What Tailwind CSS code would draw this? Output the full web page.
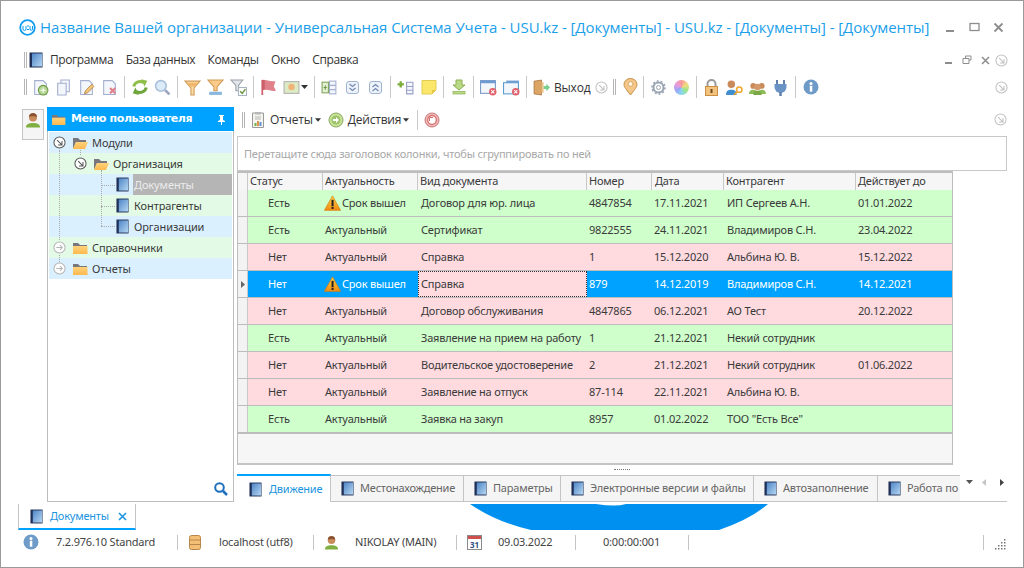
<!DOCTYPE html>
<html lang="ru">
<head>
  <meta charset="UTF-8" />
  <title>USU - Документы</title>
  <script src="https://cdn.jsdelivr.net/npm/@tailwindcss/browser@4"></script>
</head>
<body class="bg-white">
  <svg class="absolute w-0 h-0">
    <defs>
      <linearGradient id="bookG" x1="0" y1="0" x2="1" y2="1"><stop offset="0" stop-color="#4f86c6"/><stop offset="1" stop-color="#b5d6f2"/></linearGradient>
      <linearGradient id="folderG" x1="0" y1="0" x2="0" y2="1"><stop offset="0" stop-color="#ffd27a"/><stop offset="1" stop-color="#fdb94f"/></linearGradient>
      <linearGradient id="warnG" x1="0" y1="0" x2="0" y2="1"><stop offset="0" stop-color="#ffd54a"/><stop offset="1" stop-color="#f08a12"/></linearGradient>
      <symbol id="book" viewBox="0 0 14 16"><rect x="0.5" y="0.5" width="13" height="15" fill="#1f2f57"/><rect x="3" y="1.5" width="10" height="13" fill="url(#bookG)"/></symbol>
      <symbol id="folder" viewBox="0 0 16 12"><path d="M1 1h5l2 2h7v2H1z" fill="#77777d"/><rect x="1" y="4" width="14.5" height="8" fill="url(#folderG)"/></symbol>
      <symbol id="folderOpen" viewBox="0 0 16 12"><path d="M1 12V1h5l2 2h6v2H4z" fill="#77777d"/><path d="M1 12l3-7h12l-3 7z" fill="url(#folderG)"/></symbol>
      <symbol id="goDown" viewBox="0 0 14 14"><circle cx="7" cy="7" r="6" fill="#fff" stroke="currentColor" stroke-width="1.1"/><path d="M4.5 4.5l5 5M9.7 5.5v4.2H5.5" fill="none" stroke="currentColor" stroke-width="1.1"/></symbol>
      <symbol id="goRight" viewBox="0 0 14 14"><circle cx="7" cy="7" r="6" fill="#fff" stroke="currentColor" stroke-width="1.1"/><path d="M3.5 7h6.5M7.5 4.5L10 7l-2.5 2.5" fill="none" stroke="currentColor" stroke-width="1.1"/></symbol>
      <symbol id="warn" viewBox="0 0 16 15"><path d="M8 .8L15.6 14.4H.4z" fill="url(#warnG)" stroke="#d9800f" stroke-width=".7"/><rect x="7.1" y="4.5" width="1.9" height="6" fill="#222"/><rect x="7.1" y="11.2" width="1.9" height="1.9" fill="#222"/></symbol>
      <symbol id="user" viewBox="0 0 16 16"><path d="M1 15.500c0-3.500 3-4.500 7-4.500s7 1 7 4.500z" fill="#7fb041"/><circle cx="8" cy="5.500" r="4" fill="#c98b5c"/><path d="M4 5c0-3 2-4 4-4s4 1 4 4c-2-1-6-1-8 0z" fill="#8a5230"/></symbol>
      <symbol id="info" viewBox="0 0 16 16"><circle cx="8" cy="8" r="7.500" fill="#6f9bc8"/><rect x="6.800" y="6.700" width="2.500" height="6" fill="#fff"/><circle cx="8" cy="4.400" r="1.500" fill="#fff"/></symbol>
      <symbol id="page" viewBox="0 0 16 16"><path d="M2.500 1.500h8l3 3v10h-11z" fill="#f3f6fb" stroke="#a4afd0"/></symbol>
    </defs>
  </svg>

  <div class="relative w-[1024px] h-[568px] overflow-hidden border border-[#9a9a9a] flex flex-col text-[#3a3a3a] text-[11px] tracking-[-0.2px] font-['Noto_Sans','DejaVu_Sans',sans-serif]">

    <!-- заголовок окна -->
    <div class="h-[47px] shrink-0 flex items-center pl-[18px] pr-[19px] pt-[5px]">
      <svg class="w-[17px] h-[17px] mr-[4px] shrink-0" viewBox="0 0 17 17"><circle cx="8.500" cy="8.500" r="7.300" fill="none" stroke="#0e9cf2" stroke-width="1.800"/><path d="M4 7v3a1 1 0 0 0 3 0V7M8 7h2M8 10.500h2M11 7v3a1 1 0 0 0 2.500 0V7" fill="none" stroke="#0e9cf2" stroke-width="1"/></svg>
      <div class="text-[15px] tracking-[-0.075px] text-[#1ba0ea] whitespace-nowrap font-['Open_Sans',sans-serif]">Название Вашей организации - Универсальная Система Учета - USU.kz - [Документы] - USU.kz - [Документы] - [Документы]</div>
      <div class="ml-auto flex items-center gap-[13px] shrink-0">
        <svg class="w-[11px] h-[11px]" viewBox="0 0 11 11"><rect x="1" y="8" width="8" height="2" fill="#8d8d8d"/></svg>
        <svg class="w-[11px] h-[11px]" viewBox="0 0 11 11"><rect x="1" y="1.500" width="9" height="7" fill="none" stroke="#8d8d8d" stroke-width="1.300"/></svg>
        <svg class="w-[11px] h-[11px]" viewBox="0 0 11 11"><path d="M1.500 1.500l8 8M9.500 1.500l-8 8" stroke="#8d8d8d" stroke-width="1.800"/></svg>
      </div>
    </div>

    <!-- меню -->
    <div class="h-[24px] shrink-0 flex items-center pl-[23px] pr-[15px] text-[12px]">
      <div class="w-[3px] h-[16px] border-x border-[#b5b5b5] mr-[2px]"></div>
      <svg class="w-[14px] h-[16px] mr-[7px]"><use href="#book"/></svg>
      <div class="flex gap-[12.5px] text-[#333] font-['Open_Sans',sans-serif] tracking-[-0.4px]"><span>Программа</span><span>База данных</span><span>Команды</span><span>Окно</span><span>Справка</span></div>
      <div class="ml-auto flex items-center gap-[9px] text-[#8d8d8d]">
        <svg class="w-[9px] h-[9px]" viewBox="0 0 9 9"><rect x="1" y="6" width="7" height="2" fill="#8d8d8d"/></svg>
        <svg class="w-[10px] h-[10px]" viewBox="0 0 10 10"><path d="M3.500 3V1h5.500v4H7M1 3.500h6v5H1z" fill="none" stroke="#8d8d8d"/></svg>
        <svg class="w-[9px] h-[9px]" viewBox="0 0 9 9"><path d="M1 1l7 7M8 1l-7 7" stroke="#8d8d8d" stroke-width="1.500"/></svg>
        <svg class="w-[13px] h-[13px] -ml-[4px] text-[#c0c0c0]"><use href="#goDown"/></svg>
      </div>
    </div>

    <!-- панель инструментов -->
    <div class="h-[30px] shrink-0 flex items-center pl-[23px] pr-[15px]">
      <div class="w-[3px] h-[16px] border-x border-[#b5b5b5] mr-[2px]"></div>
      <div class="w-[23px] flex justify-center"><svg class="w-[17px] h-[17px]" viewBox="0 0 16 16"><use href="#page"/><circle cx="10.500" cy="10.500" r="4.500" fill="#b5d592" stroke="#6d9a45"/><path d="M10.500 8v5M8 10.500h5" stroke="#fff"/></svg></div>
      <div class="w-[23px] flex justify-center"><svg class="w-[17px] h-[17px]" viewBox="0 0 16 16"><path d="M5.500 1h8v11h-8z" fill="#f3f6fb" stroke="#a4afd0"/><path d="M2.500 4h8v11h-8z" fill="#f3f6fb" stroke="#a4afd0"/></svg></div>
      <div class="w-[23px] flex justify-center"><svg class="w-[17px] h-[17px]" viewBox="0 0 16 16"><use href="#page"/><path d="M6 14l1-3 6-6 2 2-6 6z" fill="#f3c777" stroke="#a8763a" stroke-width=".7"/></svg></div>
      <div class="w-[23px] flex justify-center"><svg class="w-[17px] h-[17px]" viewBox="0 0 16 16"><use href="#page"/><path d="M8.500 8.500l5 5M13.500 8.500l-5 5" stroke="#e0808a" stroke-width="2"/></svg></div>
      <div class="w-px h-[22px] bg-[#c8c8c8] mx-[3px]"></div>
      <div class="w-[23px] flex justify-center"><svg class="w-[18px] h-[18px]" viewBox="0 0 16 16"><path d="M2.500 7.500A5.500 5 0 0 1 11 4" fill="none" stroke="#8fbf48" stroke-width="2.600"/><path d="M9 1l5.500 1.500L12 7.500z" fill="#8fbf48"/><path d="M13.500 8.500A5.500 5 0 0 1 5 12" fill="none" stroke="#6ea53a" stroke-width="2.600"/><path d="M7 15L1.500 13.500 4 8.500z" fill="#6ea53a"/></svg></div>
      <div class="w-[23px] flex justify-center"><svg class="w-[17px] h-[17px]" viewBox="0 0 16 16"><circle cx="6.500" cy="6.500" r="5" fill="#dcebf8" stroke="#a9c0db" stroke-width="1.500"/><path d="M10.500 10.500l4 4" stroke="#99a5bf" stroke-width="2.500"/></svg></div>
      <div class="w-px h-[22px] bg-[#c8c8c8] mx-[3px]"></div>
      <div class="w-[23px] flex justify-center"><svg class="w-[17px] h-[17px]" viewBox="0 0 16 16"><path d="M1 2h14L9.500 8.500V15h-3V8.500z" fill="#fbdca8" stroke="#d09a55"/><path d="M3 3.500h10l-3 3.500H6z" fill="#f4b66a"/></svg></div>
      <div class="w-[23px] flex justify-center"><svg class="w-[17px] h-[17px]" viewBox="0 0 16 16"><path d="M1 1h14L9.500 7.500V11h-3V7.500z" fill="#fbcb8c" stroke="#d09a55"/><rect x="2" y="12" width="12" height="3" fill="#8ab8e0"/></svg></div>
      <div class="w-[23px] flex justify-center"><svg class="w-[17px] h-[17px]" viewBox="0 0 16 16"><path d="M1 1h11L8 6v5H5.500V6z" fill="#e2e5e9" stroke="#9aa1a9"/><rect x="8" y="8" width="7.500" height="7.500" fill="#fff" stroke="#a8b4c3"/><path d="M9.500 11.500l2 2 3-4" fill="none" stroke="#6d9a45" stroke-width="1.400"/></svg></div>
      <div class="w-px h-[22px] bg-[#c8c8c8] mx-[3px]"></div>
      <div class="w-[23px] flex justify-center"><svg class="w-[17px] h-[17px]" viewBox="0 0 16 16"><path d="M1.500 1c4-1 7 2 13 1l-1.500 5 2 4c-5 1-8-2-12-.500L3 15H1.500z" fill="#e0808a"/><path d="M1.500 1c1 0 2 0 3 .5V10c-1 0-2 .1-2 .5L3 15H1.500z" fill="#c9606a"/></svg></div>
      <div class="w-[23px] flex justify-center"><svg class="w-[17px] h-[17px]" viewBox="0 0 16 16"><rect x="1" y="2.500" width="14" height="11" fill="#dcebc4" stroke="#b0b0b0"/><circle cx="8" cy="7.500" r="3" fill="#f0b478"/></svg></div>
      <svg class="w-[7px] h-[4px] -ml-[2px] mr-[3px]" viewBox="0 0 7 4"><path d="M0 0h7L3.500 4z" fill="#333"/></svg>
      <div class="w-px h-[22px] bg-[#c8c8c8] mx-[3px]"></div>
      <div class="w-[23px] flex justify-center"><svg class="w-[17px] h-[17px]" viewBox="0 0 16 16"><rect x="8" y="2" width="6" height="12" fill="#f3f6fb" stroke="#a4afd0"/><path d="M8 6h6M8 10h6" stroke="#a4afd0"/><rect x="1" y="3" width="6" height="10" fill="#e3f0d4" stroke="#7fa55a"/><path d="M4 6v4M2.500 8h3" stroke="#6d9a45"/></svg></div>
      <div class="w-[23px] flex justify-center"><svg class="w-[15px] h-[15px]" viewBox="0 0 15 15"><rect x="1.500" y="1.500" width="12" height="12" rx="2.500" fill="#eef3fa" stroke="#9fb3d2"/><path d="M4.500 4l3 2.500 3-2.500M4.500 8l3 2.500 3-2.500" fill="none" stroke="#7089b5" stroke-width="1.200"/></svg></div>
      <div class="w-[23px] flex justify-center"><svg class="w-[15px] h-[15px]" viewBox="0 0 15 15"><rect x="1.500" y="1.500" width="12" height="12" rx="2.500" fill="#eef3fa" stroke="#9fb3d2"/><path d="M4.500 7l3-2.500 3 2.500M4.500 11l3-2.500 3 2.500" fill="none" stroke="#7089b5" stroke-width="1.200"/></svg></div>
      <div class="w-px h-[22px] bg-[#c8c8c8] mx-[3px]"></div>
      <div class="w-[23px] flex justify-center"><svg class="w-[17px] h-[17px]" viewBox="0 0 16 16"><path d="M3.500 2v6M.5 5h6" stroke="#7cae3c" stroke-width="2.200"/><path d="M9 3h6v11H9zM9 7h6M9 10.500h6" fill="#f3f6fb" stroke="#98a0c8"/></svg></div>
      <div class="w-[23px] flex justify-center"><svg class="w-[16px] h-[16px]" viewBox="0 0 16 16"><path d="M1 1.500h14V11l-4 4H1z" fill="#fbe76a" stroke="#e2cb55"/><path d="M15 11h-4v4z" fill="#e5c84a"/></svg></div>
      <div class="w-px h-[22px] bg-[#c8c8c8] mx-[3px]"></div>
      <div class="w-[23px] flex justify-center"><svg class="w-[16px] h-[16px]" viewBox="0 0 16 16"><path d="M5 1h6v5h3l-6 5-6-5h3z" fill="#b9da85" stroke="#8cae55"/><rect x="2" y="12.500" width="12" height="2.500" fill="#b9da85" stroke="#8cae55" stroke-width=".7"/></svg></div>
      <div class="w-px h-[22px] bg-[#c8c8c8] mx-[3px]"></div>
      <div class="w-[23px] flex justify-center"><svg class="w-[17px] h-[17px]" viewBox="0 0 16 16"><rect x=".5" y="1.500" width="14" height="12" fill="#f3f6fb" stroke="#7a9cc8"/><rect x=".5" y="1.500" width="14" height="2.500" fill="#6f9bd0"/><circle cx="12" cy="12" r="3.500" fill="#e0606a"/><path d="M10.500 10.500l3 3M13.500 10.500l-3 3" stroke="#fff"/></svg></div>
      <div class="w-[23px] flex justify-center"><svg class="w-[17px] h-[17px]" viewBox="0 0 16 16"><path d="M3 1.500h12v2H3z" fill="#6f9bd0"/><rect x=".5" y="3.500" width="14" height="10.500" fill="#f3f6fb" stroke="#5b9bd0"/><circle cx="12" cy="12" r="3.500" fill="#e0606a"/><path d="M10.500 10.500l3 3M13.500 10.500l-3 3" stroke="#fff"/></svg></div>
      <div class="w-px h-[22px] bg-[#c8c8c8] mx-[3px]"></div>
      <div class="w-[23px] flex justify-center"><svg class="w-[17px] h-[17px]" viewBox="0 0 16 16"><path d="M1 2l7-1v14l-7-1z" fill="#dba566" stroke="#a8703a" stroke-width=".7"/><path d="M8 3h2v10H8z" fill="#eec68c"/><path d="M10 6.500h2.500V4.500L16 8l-3.500 3.500v-2H10z" fill="#7ccf8c"/></svg></div>
      <span class="ml-[1px] mt-[1px] w-[40px] whitespace-nowrap text-[#333] text-[12px] font-['Open_Sans',sans-serif] tracking-[-0.2px]">Выход</span>
      <svg class="w-[13px] h-[13px] ml-[1px] text-[#c0c0c0]"><use href="#goDown"/></svg>
      <div class="w-[3px] h-[16px] border-x border-[#b5b5b5] mx-[5px]"></div>
      <div class="w-[19px] flex justify-center"><svg class="w-[15px] h-[18px]" viewBox="0 0 15 18"><path d="M7.500 17C3 11 1 9 1 6.500a6.500 6 0 0 1 13 0C14 9 12 11 7.500 17z" fill="#f3c68a" stroke="#c98f45"/><circle cx="7.500" cy="6" r="2.300" fill="#fff6e5" stroke="#c98f45" stroke-width=".6"/></svg></div>
      <div class="w-px h-[22px] bg-[#c8c8c8] mx-[3px]"></div>
      <div class="w-[23px] flex justify-center"><svg class="w-[15px] h-[15px]" viewBox="0 0 15 15"><circle cx="7.500" cy="7.500" r="5" fill="none" stroke="#9aa5b3" stroke-width="2"/><circle cx="7.500" cy="7.500" r="6.500" fill="none" stroke="#9aa5b3" stroke-width="1.500" stroke-dasharray="2 2"/><circle cx="7.500" cy="7.500" r="2" fill="#fff" stroke="#9aa5b3"/></svg></div>
      <div class="w-[23px] flex justify-center"><div class="w-[15px] h-[15px] rounded-full bg-[conic-gradient(#f79a9a,#f4dc7f,#9fe38a,#88d8ee,#9aa6f4,#eb9ae0,#f79a9a)]"></div></div>
      <div class="w-px h-[22px] bg-[#c8c8c8] mx-[3px]"></div>
      <div class="w-[23px] flex justify-center"><svg class="w-[15px] h-[17px]" viewBox="0 0 15 17"><path d="M3.500 8V5a4 4 0 0 1 8 0v3" fill="none" stroke="#9a9a9a" stroke-width="2"/><rect x="1.500" y="7.500" width="12" height="9" fill="#f3c27c" stroke="#c98f45"/><rect x="6.500" y="10" width="2" height="4" fill="#6b4a20"/></svg></div>
      <div class="w-[23px] flex justify-center"><svg class="w-[17px] h-[17px]" viewBox="0 0 16 16"><path d="M0 15c0-4 2-5 5-5s5 1 5 5z" fill="#3f8fd0"/><circle cx="5" cy="5" r="3.500" fill="#c98b5c"/><circle cx="12.500" cy="10" r="2.500" fill="none" stroke="#f0a830" stroke-width="1.500"/><path d="M10.500 12l-3 3" stroke="#f0a830" stroke-width="1.500"/></svg></div>
      <div class="w-[23px] flex justify-center"><svg class="w-[17px] h-[17px]" viewBox="0 0 16 16"><path d="M0 14c0-3 2-4 4-4s4 1 4 4zM8 14c0-3 2-4 4-4s4 1 4 4z" fill="#8dbb55"/><circle cx="4" cy="6.500" r="2.700" fill="#c98b5c"/><circle cx="12" cy="6.500" r="2.700" fill="#c98b5c"/><path d="M4 15c0-3 2-4 4-4s4 1 4 4z" fill="#7aa845"/><circle cx="8" cy="7.500" r="3" fill="#d49a6c"/></svg></div>
      <div class="w-[23px] flex justify-center"><svg class="w-[15px] h-[17px]" viewBox="0 0 15 17"><path d="M4 1v4M11 1v4" stroke="#5f7fa8" stroke-width="2"/><path d="M1.500 5h12v3a6 6 0 0 1-12 0z" fill="#6a93c5"/><path d="M7.500 13v4" stroke="#5f7fa8" stroke-width="2.500"/></svg></div>
      <div class="w-px h-[22px] bg-[#c8c8c8] mx-[3px]"></div>
      <div class="w-[23px] flex justify-center"><svg class="w-[16px] h-[16px]"><use href="#info"/></svg></div>
      <svg class="w-[13px] h-[13px] ml-auto text-[#c0c0c0]"><use href="#goDown"/></svg>
    </div>

    <!-- основная часть -->
    <div class="h-[396px] shrink-0 flex mt-[4px] pl-[21px]">
      <div class="w-[22px] h-[31px] mt-[3px] shrink-0 border border-[#c4c4c4] bg-[#f5f5f5] flex justify-center pt-[2px]">
        <svg class="w-[16px] h-[16px]"><use href="#user"/></svg>
      </div>

      <!-- меню пользователя -->
      <div class="w-[187px] h-[395px] mt-[1px] ml-[3px] shrink-0 flex flex-col border border-t-0 border-[#bdbdbd] relative">
        <div class="h-[24px] shrink-0 bg-[#00a2ff] -mx-px flex items-center pt-[1px] pl-[4px] pr-[8px] text-white font-bold text-[11px] font-['DejaVu_Sans',sans-serif] tracking-[-0.4px]">
          <svg class="w-[15px] h-[11px] mr-[5px]"><use href="#folder"/></svg>Меню пользователя
          <svg class="w-[9px] h-[10px] ml-auto" viewBox="0 0 9 10"><path d="M2 0h5v1H6v4l2 1v1H5v3H4V7H1V6l2-1V1H2z" fill="#fff"/></svg>
        </div>
        <div class="mt-[1px] mx-px tracking-[-0.1px] relative">
          <div class="h-[21px] bg-[#daf0ff] flex items-center pl-[4px]"><svg class="w-[13px] h-[13px] text-[#555]"><use href="#goDown"/></svg><svg class="w-[16px] h-[12px] ml-[6px] mr-[4px]"><use href="#folderOpen"/></svg><span class="mt-[2px]">Модули</span></div>
          <div class="h-[21px] bg-[#e3fbe6] flex items-center pl-[25px]"><svg class="w-[13px] h-[13px] text-[#555]"><use href="#goDown"/></svg><svg class="w-[16px] h-[12px] ml-[6px] mr-[4px]"><use href="#folderOpen"/></svg><span class="mt-[2px]">Организация</span></div>
          <div class="h-[21px] bg-[#daf0ff] flex items-center pl-[67px]"><svg class="w-[13px] h-[15px] mr-[4px]"><use href="#book"/></svg><span class="self-stretch flex-1 bg-[#b5b5b5] text-[#ececec] flex items-center pl-[1px] pt-[2px]">Документы</span></div>
          <div class="h-[21px] bg-[#e3fbe6] flex items-center pl-[67px]"><svg class="w-[13px] h-[15px] mr-[5px]"><use href="#book"/></svg><span class="mt-[2px]">Контрагенты</span></div>
          <div class="h-[21px] bg-[#daf0ff] flex items-center pl-[67px]"><svg class="w-[13px] h-[15px] mr-[5px]"><use href="#book"/></svg><span class="mt-[2px]">Организации</span></div>
          <div class="h-[21px] bg-[#e3fbe6] flex items-center pl-[4px]"><svg class="w-[13px] h-[13px] text-[#b5b5b5]"><use href="#goRight"/></svg><svg class="w-[16px] h-[12px] ml-[6px] mr-[4px]"><use href="#folder"/></svg><span class="mt-[2px]">Справочники</span></div>
          <div class="h-[21px] bg-[#daf0ff] flex items-center pl-[4px]"><svg class="w-[13px] h-[13px] text-[#b5b5b5]"><use href="#goRight"/></svg><svg class="w-[16px] h-[12px] ml-[6px] mr-[4px]"><use href="#folder"/></svg><span class="mt-[2px]">Отчеты</span></div>
          <!-- линии дерева -->
          <div class="absolute left-[10px] top-[18px] h-[90px] border-l border-dotted border-[#aaa]"></div>
          <div class="absolute left-[10px] top-[123px] h-[7px] border-l border-dotted border-[#aaa]"></div>
          <div class="absolute left-[31px] top-[18px] h-[5px] border-l border-dotted border-[#aaa]"></div>
          <div class="absolute left-[52px] top-[38px] h-[56px] border-l border-dotted border-[#aaa]"></div>
          <div class="absolute left-[52px] top-[53px] w-[14px] border-t border-dotted border-[#aaa]"></div>
          <div class="absolute left-[52px] top-[74px] w-[14px] border-t border-dotted border-[#aaa]"></div>
          <div class="absolute left-[52px] top-[94px] w-[14px] border-t border-dotted border-[#aaa]"></div>
        </div>
        <svg class="absolute right-[5px] bottom-[5px] w-[14px] h-[14px]" viewBox="0 0 14 14"><circle cx="5.500" cy="5.500" r="4.300" fill="none" stroke="#1f6fc0" stroke-width="2"/><path d="M9 9l4 4" stroke="#1f6fc0" stroke-width="2.500"/></svg>
      </div>

      <!-- правая часть -->
      <div class="w-[770px] ml-[3px] shrink-0 flex flex-col">
        <div class="h-[30px] shrink-0 flex items-center pb-[3px] text-[12px] text-[#333] pl-[5px] font-['Open_Sans',sans-serif] tracking-[-0.2px]">
          <div class="w-[3px] h-[16px] border-x border-[#b5b5b5] mr-[5px]"></div>
          <svg class="w-[16px] h-[17px] mr-[4px]" viewBox="0 0 16 17"><path d="M2.500 2h11v14.500h-11z" fill="#f5f5f0" stroke="#9a9a9a"/><rect x="5" y="1" width="6" height="2.500" fill="#b8b8b8"/><path d="M5 6h6M5 8h6" stroke="#b5b5b5"/><rect x="4.500" y="12" width="2" height="3" fill="#6fb04a"/><rect x="7" y="10" width="2" height="5" fill="#e3934a"/><rect x="9.500" y="11" width="2" height="4" fill="#5c93cc"/></svg>
          Отчеты
          <svg class="w-[6px] h-[4px] ml-[2px] mr-[7px]" viewBox="0 0 7 4"><path d="M0 0h7L3.500 4z" fill="#333"/></svg>
          <svg class="w-[16px] h-[16px] mr-[4px]" viewBox="0 0 16 16"><circle cx="8" cy="8" r="7" fill="#cbe29a" stroke="#86a95a"/><circle cx="8" cy="8" r="4.500" fill="#9cc36a"/><path d="M5 7h3V5l3 3-3 3V9H5z" fill="#fff"/></svg>
          Действия
          <svg class="w-[6px] h-[4px] ml-[2px] mr-[8px]" viewBox="0 0 7 4"><path d="M0 0h7L3.500 4z" fill="#333"/></svg>
          <div class="w-px h-[20px] bg-[#c8c8c8] mr-[6px]"></div>
          <svg class="w-[16px] h-[16px]" viewBox="0 0 16 16"><circle cx="8" cy="8" r="7" fill="#f0b5b5" stroke="#c97a7a"/><circle cx="8" cy="8" r="4.300" fill="#fff" stroke="#d16a6a" stroke-width="1.200"/><path d="M5.500 5.500H9M5.500 5.500V9" stroke="#d16a6a"/></svg>
          <svg class="w-[13px] h-[13px] ml-auto text-[#c0c0c0]"><use href="#goDown"/></svg>
        </div>

        <div class="h-[35px] shrink-0 border border-[#c8c8c8] flex items-center pt-[2px] pl-[6px] text-[#a8a8a8]">Перетащите сюда заголовок колонки, чтобы сгруппировать по ней</div>

        <!-- таблица -->
        <div class="h-[294px] shrink-0 w-[716px] flex flex-col border-l border-r border-[#bdbdbd]">
          <div class="h-[19px] shrink-0 border-t-2 border-[#bdbdbd] bg-[#f6f6f6] grid grid-cols-[10px_75px_95px_169px_65px_72px_132px_96px] items-stretch leading-[15px]">
            <div class="border-r border-[#c8c8c8]"></div><div class="border-r border-[#c8c8c8] pl-[2px]">Статус</div><div class="border-r border-[#c8c8c8] pl-[2px]">Актуальность</div><div class="border-r border-[#c8c8c8] pl-[2px]">Вид документа</div><div class="border-r border-[#c8c8c8] pl-[2px]">Номер</div><div class="border-r border-[#c8c8c8] pl-[3px]">Дата</div><div class="border-r border-[#c8c8c8] pl-[2px]">Контрагент</div><div class="pl-[2px]">Действует до</div>
          </div>
          <div id="rows"></div>
          <div class="flex-1 bg-[#f6f6f6] border-t border-[#bdbdbd] border-b-2 border-b-[#c4c4c4]"></div>
        </div>

        <!-- сплиттер -->
        <div class="h-[9px] shrink-0 flex justify-center items-center"><div class="w-[16px] border-t border-dotted border-[#777]"></div></div>

        <!-- вкладки -->
        <div class="h-[28px] shrink-0 flex items-stretch border-b border-[#c4c4c4] relative">
          <div class="w-[94px] shrink-0 bg-white border-t-2 border-[#00a2ff] border-r border-r-[#c4c4c4] -mb-px flex items-center pl-[12px] text-[#1b95e0]"><svg class="w-[13px] h-[15px] mr-[7px]"><use href="#book"/></svg>Движение</div>
          <div class="w-[133px] shrink-0 bg-[#f5f5f5] border-t border-r border-[#c4c4c4] mt-[1px] flex items-center pl-[10px] text-[#666]"><svg class="w-[13px] h-[15px] mr-[6px]"><use href="#book"/></svg>Местонахождение</div>
          <div class="w-[97px] shrink-0 bg-[#f5f5f5] border-t border-r border-[#c4c4c4] mt-[1px] flex items-center pl-[10px] text-[#666]"><svg class="w-[13px] h-[15px] mr-[6px]"><use href="#book"/></svg>Параметры</div>
          <div class="w-[193px] shrink-0 bg-[#f5f5f5] border-t border-r border-[#c4c4c4] mt-[1px] flex items-center pl-[10px] text-[#666]"><svg class="w-[13px] h-[15px] mr-[6px]"><use href="#book"/></svg>Электронные версии и файлы</div>
          <div class="w-[124px] shrink-0 bg-[#f5f5f5] border-t border-r border-[#c4c4c4] mt-[1px] flex items-center pl-[10px] text-[#666]"><svg class="w-[13px] h-[15px] mr-[6px]"><use href="#book"/></svg>Автозаполнение</div>
          <div class="w-[82px] shrink-0 bg-[#f5f5f5] border-t border-[#c4c4c4] mt-[1px] flex items-center pl-[10px] text-[#666] overflow-hidden whitespace-nowrap"><svg class="w-[13px] h-[15px] mr-[6px] shrink-0"><use href="#book"/></svg>Работа по</div>
          <div class="ml-[6px] h-[16px] flex items-center gap-[9px]">
            <svg class="w-[7px] h-[4px]" viewBox="0 0 7 4"><path d="M0 0h7L3.500 4z" fill="#555"/></svg>
            <svg class="w-[4px] h-[7px]" viewBox="0 0 4 7"><path d="M4 0v7L0 3.500z" fill="#c4c4c4"/></svg>
            <svg class="w-[4px] h-[7px] ml-[5px]" viewBox="0 0 4 7"><path d="M0 0v7l4-3.500z" fill="#444"/></svg>
          </div>
        </div>
      </div>
    </div>

    <!-- вкладка окна -->
    <div class="h-[28px] shrink-0 pl-[17px] relative">
      <svg class="absolute left-[455px] top-[2px] w-[320px] h-[26px]" viewBox="0 0 320 26"><path d="M14 0Q40 18 75 26H263Q295 15 312 0H170Q160 3 140 0Z" fill="#0091f0"/></svg>
      <div class="relative w-[118px] h-[26px] mt-[2px] border-x border-[#c4c4c4] border-b-[2px] border-b-[#00a2ff] flex items-center pt-[1px] pl-[11px] text-[#1b95e0]">
        <svg class="w-[13px] h-[15px] mr-[7px]"><use href="#book"/></svg>Документы
        <svg class="w-[9px] h-[9px] ml-[9px]" viewBox="0 0 9 9"><path d="M1 1l7 7M8 1l-7 7" stroke="#1b95e0" stroke-width="1.600"/></svg>
      </div>
    </div>

    <!-- строка состояния -->
    <div class="h-[24px] shrink-0 flex items-center pl-[22px] pr-[17px] text-[#444] relative">
      <svg class="w-[16px] h-[16px]"><use href="#info"/></svg>
      <span class="ml-[17px] w-[121px]">7.2.976.10 Standard</span>
      <div class="w-px h-[15px] bg-[#c4c4c4]"></div>
      <svg class="w-[12px] h-[15px] ml-[11px]" viewBox="0 0 12 15"><rect x=".5" y=".5" width="11" height="14" rx="2" fill="#f3bf76" stroke="#b8864a"/><path d="M1 5h10M1 9.500h10" stroke="#b8864a"/></svg>
      <span class="ml-[18px] w-[94px]">localhost (utf8)</span>
      <div class="w-px h-[15px] bg-[#c4c4c4]"></div>
      <svg class="w-[15px] h-[15px] ml-[10px]"><use href="#user"/></svg>
      <span class="ml-[16px] w-[101px]">NIKOLAY (MAIN)</span>
      <div class="w-px h-[15px] bg-[#c4c4c4]"></div>
      <svg class="w-[15px] h-[15px] ml-[10px]" viewBox="0 0 15 15"><rect x=".5" y=".5" width="14" height="14" fill="#fff" stroke="#8a8a8a"/><rect x="1" y="1" width="13" height="3" fill="#d05050"/><text x="7.500" y="12.500" font-size="8" font-weight="700" text-anchor="middle" fill="#2f4f86">31</text></svg>
      <span class="ml-[16px] w-[77px]">09.03.2022</span>
      <div class="w-px h-[15px] bg-[#c4c4c4]"></div>
      <span class="ml-[27px] w-[85px]">0:00:00:001</span>
      <div class="w-px h-[15px] bg-[#c4c4c4]"></div>
      <div class="ml-auto w-px h-[15px] bg-[#c4c4c4]"></div>
      <svg class="w-[11px] h-[11px] ml-[11px] mt-[4px]" viewBox="0 0 11 11"><path d="M9 0h1.500v1.500H9zM6 3h1.500v1.500H6zM9 3h1.500v1.500H9zM3 6h1.500v1.500H3zM6 6h1.500v1.500H6zM9 6h1.500v1.500H9zM0 9h1.500v1.500H0zM3 9h1.500v1.500H3zM6 9h1.500v1.500H6zM9 9h1.500v1.500H9z" fill="#777"/></svg>
    </div>
  </div>

  <script>
    const data = [
      ['Есть', 'warn', 'Договор для юр. лица', '4847854', '17.11.2021', 'ИП Сергеев А.Н.', '01.01.2022'],
      ['Есть', '', 'Сертификат', '9822555', '24.11.2021', 'Владимиров С.Н.', '23.04.2022'],
      ['Нет', '', 'Справка', '1', '15.12.2020', 'Альбина Ю. В.', '15.12.2022'],
      ['Нет', 'warn', 'Справка', '879', '14.12.2019', 'Владимиров С.Н.', '14.12.2021', 'sel'],
      ['Нет', '', 'Договор обслуживания', '4847865', '06.12.2021', 'АО Тест', '20.12.2022'],
      ['Есть', '', 'Заявление на прием на работу', '1', '21.12.2021', 'Некий сотрудник', ''],
      ['Нет', '', 'Водительское удостоверение', '2', '21.12.2021', 'Некий сотрудник', '01.06.2022'],
      ['Нет', '', 'Заявление на отпуск', '87-114', '22.11.2021', 'Альбина Ю. В.', ''],
      ['Есть', '', 'Заявка на закуп', '8957', '01.02.2022', 'ТОО "Есть Все"', '']
    ];
    const warnIcon = '<svg class="w-[17px] h-[16px] -ml-[1px] mr-[1px] shrink-0"><use href="#warn"/></svg>';
    document.getElementById('rows').innerHTML = data.map(function (r) {
      const sel = r[7] === 'sel';
      const bg = sel ? 'bg-[#00a2ff] text-white' : (r[0] === 'Есть' ? 'bg-[#cfffcb]' : 'bg-[#ffdbe0]');
      const actual = r[1] === 'warn' ? warnIcon + 'Срок вышел' : 'Актуальный';
      const pin = sel ? '<svg class="w-[4px] h-[7px]" viewBox="0 0 4 7"><path d="M0 0v7l4-3.500z" fill="#666"/></svg>' : '';
      const doc = sel
        ? '<div class="bg-[#ffdbe0] text-[#3a3a3a] outline-1 outline-dotted -outline-offset-1 outline-[#333] flex items-center pl-[3px]">' + r[2] + '</div>'
        : '<div class="flex items-center pl-[3px]">' + r[2] + '</div>';
      return '<div class="h-[27px] grid grid-cols-[10px_75px_95px_169px_65px_72px_132px_96px] border-b border-[#bcbcbc]">' +
        '<div class="bg-[#f3f3f3] border-r border-[#c8c8c8] flex items-center justify-center">' + pin + '</div>' +
        '<div class="col-span-7 grid grid-cols-[75px_95px_169px_65px_72px_132px_96px] ' + bg + '">' +
        '<div class="flex items-center pl-[20px]">' + r[0] + '</div>' +
        '<div class="flex items-center pl-[2px] whitespace-nowrap">' + actual + '</div>' +
        doc +
        '<div class="flex items-center pl-[2px]">' + r[3] + '</div>' +
        '<div class="flex items-center pl-[2px]">' + r[4] + '</div>' +
        '<div class="flex items-center pl-[3px]">' + r[5] + '</div>' +
        '<div class="flex items-center pl-[2px]">' + r[6] + '</div>' +
        '</div></div>';
    }).join('');
  </script>
</body>
</html>
